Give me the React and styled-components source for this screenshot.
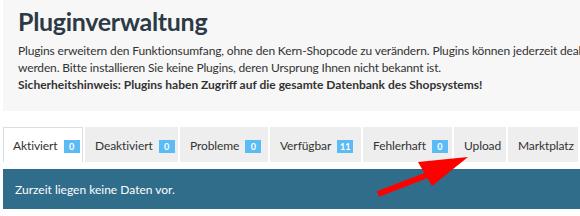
import React from 'react';
import styled, { createGlobalStyle } from 'styled-components';

const GlobalStyle = createGlobalStyle`
  html, body {
    margin: 0;
    padding: 0;
    background: #fff;
  }
  body {
    font-family: Lato, "Open Sans", sans-serif;
    color: #333;
  }
`;

const Page = styled.div`
  position: relative;
  width: 580px;
  height: 216px;
  padding-left: 3px;
  box-sizing: border-box;
  overflow: hidden;
`;

const Header = styled.div`
  background: #f7f7f7;
  padding: 5px 15px 0;
  height: 111px;
  box-sizing: border-box;
`;

const Title = styled.h1`
  margin: 0 0 5px;
  font-size: 25px;
  font-weight: 700;
  letter-spacing: -0.3px;
  color: #2d3a45;
  line-height: 32px;
`;

const Intro = styled.p`
  margin: 0;
  font-size: 12px;
  letter-spacing: ${(p) => (p.$bold ? '0' : '-0.15px')};
  font-weight: ${(p) => (p.$bold ? 700 : 400)};
  line-height: 17px;
  white-space: nowrap;
`;

const Tabs = styled.ul`
  display: flex;
  gap: 2px;
  list-style: none;
  margin: 16px 0 0;
  padding: 0;
  height: 35px;
`;

const Tab = styled.li`
  display: flex;
  align-items: center;
  gap: 6px;
  padding: 0 9px;
  box-sizing: border-box;
  width: ${(p) => p.$w}px;
  font-size: 12px;
  letter-spacing: -0.1px;
  color: #333;
  background: ${(p) => (p.$active ? '#fff' : '#eee')};
  border: 1px solid ${(p) => (p.$active ? '#ddd' : '#eee')};
  border-bottom: none;
`;

const Badge = styled.span`
  display: inline-flex;
  align-items: center;
  justify-content: center;
  min-width: 16px;
  height: 13px;
  padding: 0 3px;
  box-sizing: border-box;
  background: #5bbcf5;
  color: #fff;
  font-size: 9px;
  font-weight: 700;
  letter-spacing: 0;
  margin-top: 2px;
`;

const Notice = styled.div`
  margin-top: 7px;
  height: 40px;
  display: flex;
  align-items: center;
  padding-left: 12px;
  background: #306d8b;
  color: #fff;
  font-size: 12px;
`;

const Arrow = styled.svg`
  position: absolute;
  left: 370px;
  top: 150px;
`;

const tabs = [
  { label: 'Aktiviert', count: '0', w: 80, active: true },
  { label: 'Deaktiviert', count: '0', w: 93 },
  { label: 'Probleme', count: '0', w: 88 },
  { label: 'Verfügbar', count: '11', w: 91 },
  { label: 'Fehlerhaft', count: '0', w: 89 },
  { label: 'Upload', w: 52 },
  { label: 'Marktplatz', w: 70 },
];

export default function App() {
  return (
    <Page>
      <GlobalStyle />
      <Header>
        <Title>Pluginverwaltung</Title>
        <Intro>
          Plugins erweitern den Funktionsumfang, ohne den Kern-Shopcode zu verändern. Plugins können jederzeit deaktiviert
        </Intro>
        <Intro>werden. Bitte installieren Sie keine Plugins, deren Ursprung Ihnen nicht bekannt ist.</Intro>
        <Intro $bold>Sicherheitshinweis: Plugins haben Zugriff auf die gesamte Datenbank des Shopsystems!</Intro>
      </Header>
      <Tabs>
        {tabs.map((t) => (
          <Tab key={t.label} $w={t.w} $active={t.active}>
            {t.label}
            {t.count && <Badge>{t.count}</Badge>}
          </Tab>
        ))}
      </Tabs>
      <Notice>Zurzeit liegen keine Daten vor.</Notice>
      <Arrow width="110" height="60" viewBox="0 0 110 60">
        <line x1="8" y1="44" x2="60" y2="24" stroke="#f00" strokeWidth="6" />
        <polygon points="98,7 48,12 62,36" fill="#f00" />
      </Arrow>
    </Page>
  );
}
